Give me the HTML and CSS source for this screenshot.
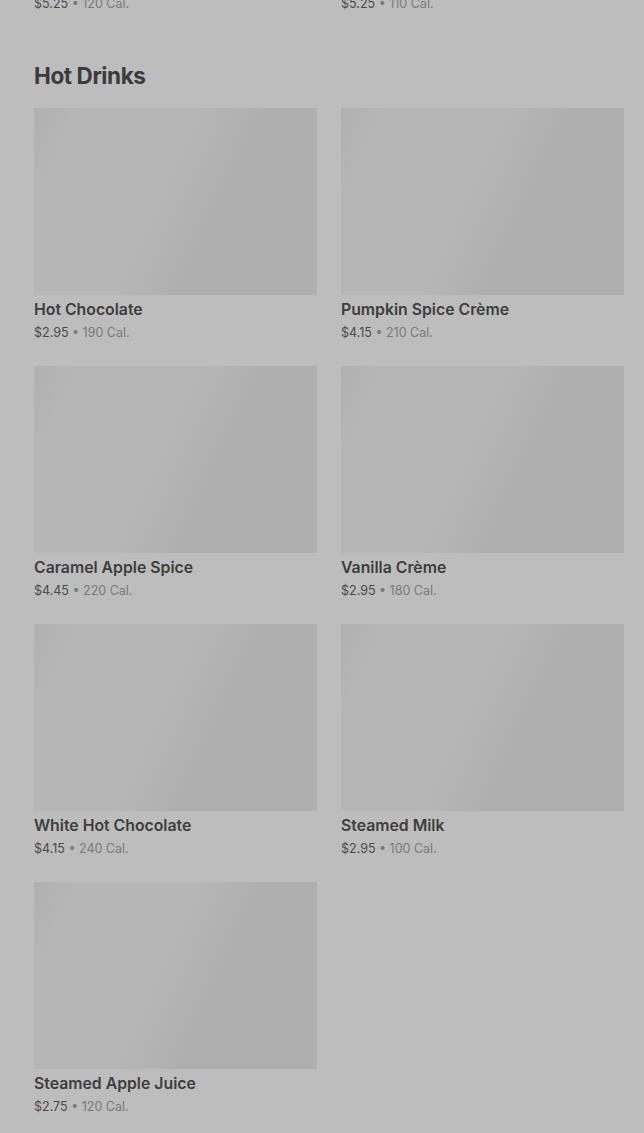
FILE: index.html
```html
<!DOCTYPE html>
<html lang="en">
<head>
    <meta charset="UTF-8">
    <meta name="viewport" content="width=device-width, initial-scale=1.0">
    <title>Menu - Hot Drinks</title>
    <link rel="stylesheet" href="styles.css">
</head>
<body>

<div class="menu">
    <div class="grid prev-row">
        <div class="meta"><span class="price">$5.25</span> • 120 Cal.</div>
        <div class="meta"><span class="price">$5.25</span> • 110 Cal.</div>
    </div>

    <h2 class="section-title">Hot Drinks</h2>

    <div class="grid">
        <div class="item">
            <div class="thumb"></div>
            <div class="name">Hot Chocolate</div>
            <div class="meta"><span class="price">$2.95</span> • 190 Cal.</div>
        </div>
        <div class="item">
            <div class="thumb"></div>
            <div class="name">Pumpkin Spice Crème</div>
            <div class="meta"><span class="price">$4.15</span> • 210 Cal.</div>
        </div>
        <div class="item">
            <div class="thumb"></div>
            <div class="name">Caramel Apple Spice</div>
            <div class="meta"><span class="price">$4.45</span> • 220 Cal.</div>
        </div>
        <div class="item">
            <div class="thumb"></div>
            <div class="name">Vanilla Crème</div>
            <div class="meta"><span class="price">$2.95</span> • 180 Cal.</div>
        </div>
        <div class="item">
            <div class="thumb"></div>
            <div class="name">White Hot Chocolate</div>
            <div class="meta"><span class="price">$4.15</span> • 240 Cal.</div>
        </div>
        <div class="item">
            <div class="thumb"></div>
            <div class="name">Steamed Milk</div>
            <div class="meta"><span class="price">$2.95</span> • 100 Cal.</div>
        </div>
        <div class="item">
            <div class="thumb"></div>
            <div class="name">Steamed Apple Juice</div>
            <div class="meta"><span class="price">$2.75</span> • 120 Cal.</div>
        </div>
    </div>
</div>

</body>
</html>
```

FILE: styles.css
```css
body {
    margin: 0;
    background-color: #bdbdbd;
    font-family: Inter, "Noto Sans", sans-serif;
    overflow: hidden;
}
.menu {
    padding: 0 20px 0 34px;
}
.grid {
    display: grid;
    grid-template-columns: 1fr 1fr;
    column-gap: 24px;
    row-gap: 21px;
}
.prev-row {
    margin-top: -8px;
}
.section-title {
    margin: 44px 0 16px;
    font-size: 22.5px;
    line-height: 32px;
    font-weight: 700;
    letter-spacing: -0.4px;
    color: #3b3b3b;
}
.thumb {
    height: 187px;
    background: linear-gradient(115deg, #b0b0b0 0%, #b6b6b6 12%, #b6b6b6 45%, #afafaf 62%, #afafaf 100%);
}
.name {
    margin-top: 4px;
    font-size: 15.8px;
    line-height: 22px;
    font-weight: 600;
    color: #3d3d3d;
}
.meta {
    font-size: 12.5px;
    line-height: 24px;
    color: #7a7a7a;
}
.price {
    color: #4a4a4a;
}
```
